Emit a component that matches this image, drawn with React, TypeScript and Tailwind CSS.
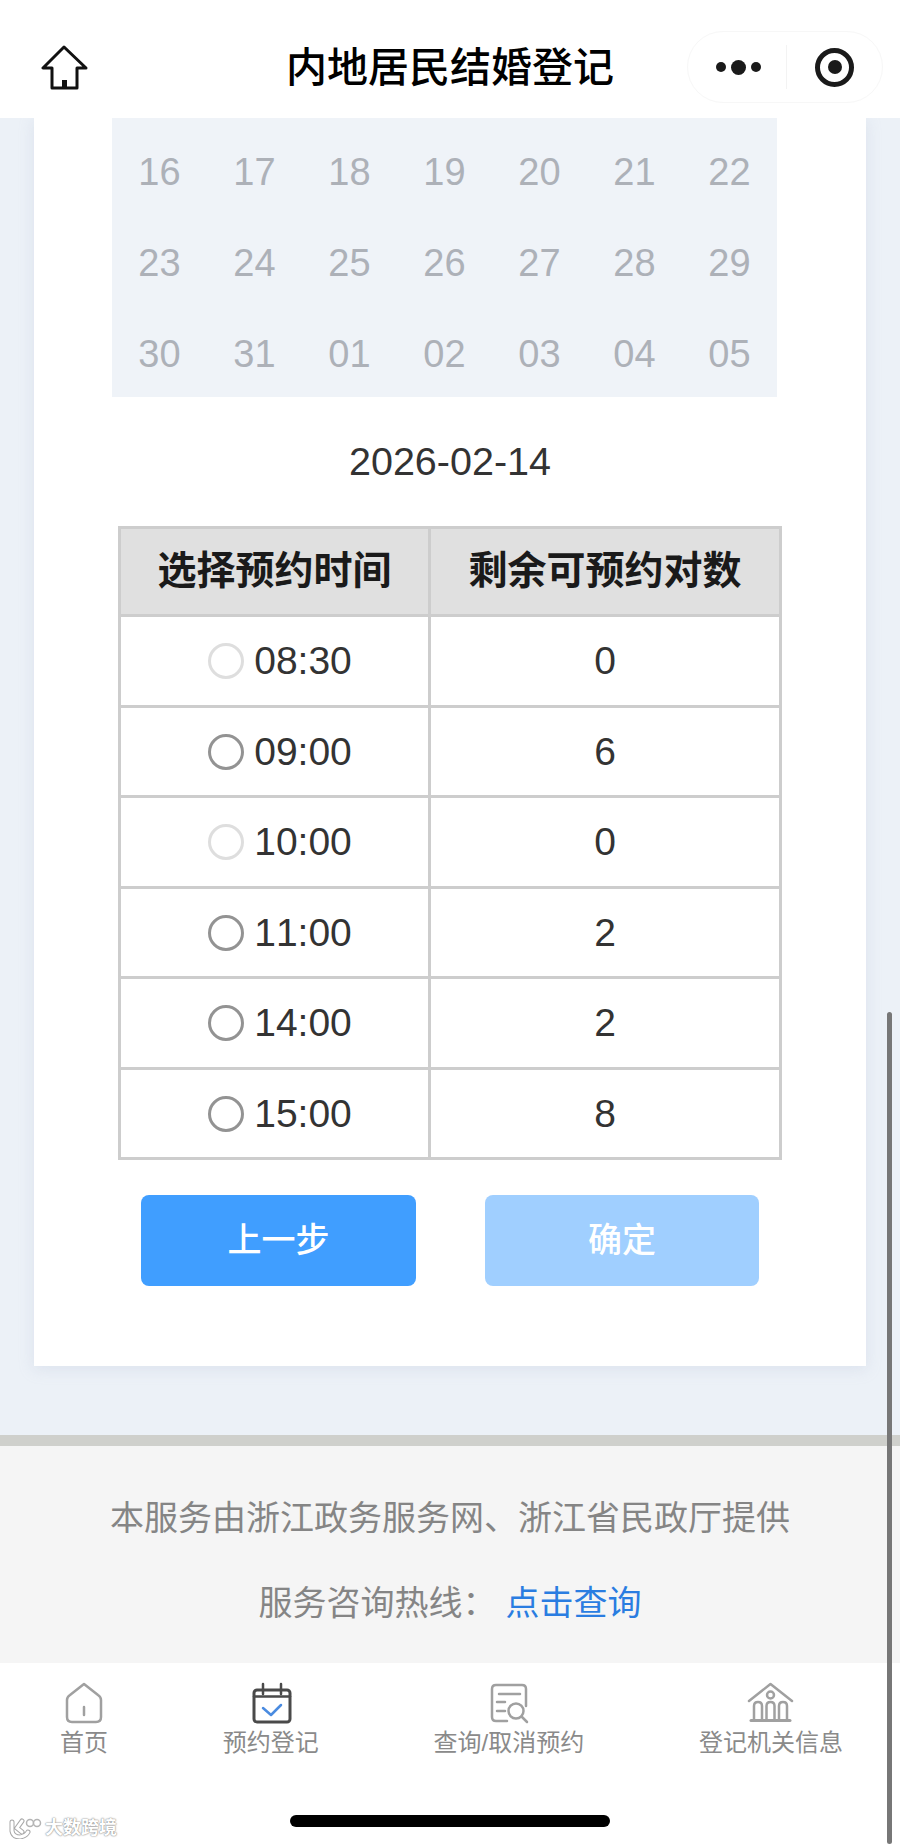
const days = [
  '16', '17', '18', '19', '20', '21', '22',
  '23', '24', '25', '26', '27', '28', '29',
  '30', '31', '01', '02', '03', '04', '05',
];

const slots = [
  { time: '08:30', left: 0 },
  { time: '09:00', left: 6 },
  { time: '10:00', left: 0 },
  { time: '11:00', left: 2 },
  { time: '14:00', left: 2 },
  { time: '15:00', left: 8 },
];

const HomeOutline = () => (
  <svg width="48" height="46" viewBox="0 0 48 46" fill="none" stroke="#111" strokeWidth="3" strokeLinejoin="round">
    <path d="M24 2 L3 23 L12 23 L12 43 L37 43 L37 23 L46 23 Z" />
    <rect x="22" y="35" width="5" height="8" fill="#111" stroke="none" />
  </svg>
);

const TabHome = () => (
  <svg width="38" height="42" viewBox="0 0 38 42" fill="none" stroke="#a0a0a0" strokeWidth="2.5" strokeLinejoin="round" strokeLinecap="round">
    <path d="M19 2 L33 13 Q36 15 36 18 L36 35 Q36 40 31 40 L7 40 Q2 40 2 35 L2 18 Q2 15 5 13 Z" />
    <path d="M19 25 L19 33" />
  </svg>
);

const TabCalendar = () => (
  <svg width="40" height="42" viewBox="0 0 40 42" fill="none" strokeLinecap="round" strokeLinejoin="round">
    <rect x="2" y="8" width="36" height="32" rx="3" stroke="#4a4a4a" strokeWidth="3" />
    <path d="M2 14.5 L38 14.5" stroke="#4a4a4a" strokeWidth="2.5" />
    <path d="M11 2 L11 12 M29 2 L29 12" stroke="#4a4a4a" strokeWidth="2.5" />
    <path d="M11 26 L19 33 L29 23" stroke="#4a8be0" strokeWidth="2.5" />
  </svg>
);

const TabSearch = () => (
  <svg width="40" height="42" viewBox="0 0 40 42" fill="none" stroke="#a0a0a0" strokeWidth="2.5" strokeLinecap="round" strokeLinejoin="round">
    <path d="M18 39 L7 39 Q3 39 3 35 L3 7 Q3 3 7 3 L33 3 Q37 3 37 7 L37 24" />
    <path d="M10 12 L31 12 M8 20 L16 20 M8 29 L16 29" />
    <circle cx="27" cy="29" r="7.5" />
    <path d="M32.5 34.5 L38 40" />
  </svg>
);

const TabBank = () => (
  <svg width="47" height="42" viewBox="0 0 47 42" fill="none" stroke="#a0a0a0" strokeWidth="2.5" strokeLinecap="round" strokeLinejoin="round">
    <path d="M2 19 L23.5 2 L45 19" />
    <circle cx="23.5" cy="13" r="3.5" />
    <path d="M7 37 L7 24 Q7 20 11 20 Q15 20 15 24 L15 37" />
    <path d="M19.5 37 L19.5 24 Q19.5 20 23.5 20 Q27.5 20 27.5 24 L27.5 37" />
    <path d="M32 37 L32 24 Q32 20 36 20 Q40 20 40 24 L40 37" />
    <path d="M4 38.5 L43 38.5" strokeWidth="3" />
  </svg>
);

const tabs = [
  { label: '首页', icon: <TabHome /> },
  { label: '预约登记', icon: <div className="pl-[3px]"><TabCalendar /></div> },
  { label: '查询/取消预约', icon: <TabSearch /> },
  { label: '登记机关信息', icon: <TabBank /> },
];

export default function App() {
  return (
    <div className="relative flex h-[1844px] w-[900px] flex-col overflow-hidden bg-white font-['Liberation_Sans','Noto_Sans_CJK_SC',sans-serif]">
      {/* top bar */}
      <header className="relative z-10 flex h-[118px] shrink-0 items-center justify-center bg-white pt-[19px]">
        <div className="absolute left-[40px] top-[45px]">
          <HomeOutline />
        </div>
        <h1 className="text-[41px] font-medium leading-none text-black">内地居民结婚登记</h1>
        <div className="absolute left-[687px] top-[31px] flex h-[72px] w-[196px] items-center rounded-[36px] border border-[#f7f7f7] bg-white">
          <div className="flex w-[98px] items-center justify-center gap-[5px] pl-[2px]">
            <span className="h-[10px] w-[10px] rounded-full bg-[#1a1a1a]" />
            <span className="h-[15px] w-[15px] rounded-full bg-[#1a1a1a]" />
            <span className="h-[10px] w-[10px] rounded-full bg-[#1a1a1a]" />
          </div>
          <span className="h-[44px] w-px bg-[#f3f3f3]" />
          <div className="flex flex-1 items-center justify-center">
            <span className="flex h-[39px] w-[39px] items-center justify-center rounded-full border-[5px] border-[#1a1a1a]">
              <span className="h-[14px] w-[14px] rounded-full bg-[#1a1a1a]" />
            </span>
          </div>
        </div>
      </header>

      {/* scrolled content */}
      <main className="h-[1317px] shrink-0 bg-[#ecf1f7] px-[34px]">
        <section className="h-[1248px] bg-white shadow-[0_3px_14px_rgba(170,185,210,0.25)]">
          <div className="ml-[78px] mr-[89px] grid h-[279px] grid-cols-7 auto-rows-[91px] overflow-hidden bg-[#eff3f8] pt-[9px]">
            {days.map((d) => (
              <div key={d} className="flex items-center justify-center text-[38px] text-[#adb1b8]">
                {d}
              </div>
            ))}
          </div>

          <div className="flex h-[129px] items-center justify-center pt-[1px] text-[39.5px] text-[#333]">2026-02-14</div>

          <div className="mx-[84px] border-[3px] border-b-0 border-[#cdcdcd] text-[39px] text-[#333] [font-kerning:none]">
            <div className="grid h-[88px] grid-cols-[310px_1fr] items-stretch border-b-[3px] border-[#cdcdcd] bg-[#e0e0e0] font-bold text-[#1a1a1a]">
              <div className="flex items-center justify-center border-r-[3px] border-[#cdcdcd]">选择预约时间</div>
              <div className="flex items-center justify-center">剩余可预约对数</div>
            </div>
            {slots.map((s) => (
              <div key={s.time} className="grid h-[90.5px] grid-cols-[310px_1fr] items-stretch border-b-[3px] border-[#cdcdcd]">
                <div className="flex items-center justify-center gap-[10px] border-r-[3px] border-[#cdcdcd] pl-[11px] pt-[1px]">
                  <span
                    className={
                      s.left === 0
                        ? 'h-[36px] w-[36px] rounded-full border-[3px] border-[#dedede]'
                        : 'h-[36px] w-[36px] rounded-full border-[3px] border-[#939393]'
                    }
                  />
                  <span>{s.time}</span>
                </div>
                <div className="flex items-center justify-center pt-[1px]">{s.left}</div>
              </div>
            ))}
          </div>

          <div className="mx-[107px] mt-[35px] flex justify-between">
            <button className="h-[91px] w-[275px] rounded-[8px] bg-[#409eff] text-[34px] font-medium text-white">上一步</button>
            <button className="h-[91px] w-[274px] rounded-[8px] bg-[#a0cfff] text-[34px] font-medium text-white">确定</button>
          </div>
        </section>
      </main>

      {/* service info */}
      <footer className="flex h-[228px] shrink-0 flex-col items-center border-t-[11px] border-[#cfd0cc] bg-[#f5f5f5] pt-[48px] text-[34px] text-[#858585]">
        <p className="leading-[48px]">本服务由浙江政务服务网、浙江省民政厅提供</p>
        <p className="mt-[37px] flex gap-[9px] leading-[48px]">
          <span>服务咨询热线：</span>
          <span className="text-[#2a7de1]">点击查询</span>
        </p>
      </footer>

      {/* tab bar */}
      <nav className="flex flex-1 items-start justify-between bg-white pl-[60px] pr-[57px] pt-[19px]">
        {tabs.map((t) => (
          <div key={t.label} className="flex flex-col items-center">
            <div className="flex h-[42px] items-center justify-center">{t.icon}</div>
            <span className="mt-[2px] text-[24px] leading-[34px] text-[#8a8a8a]">{t.label}</span>
          </div>
        ))}
      </nav>

      {/* phone overlays */}
      <div className="absolute left-[290px] top-[1815px] h-[12px] w-[320px] rounded-full bg-black" />
      <div className="absolute left-[887px] top-[1012px] h-[832px] w-[5px] rounded-full bg-[#777]" />
      <div className="absolute left-[8px] top-[1816px] flex items-center gap-[3px]">
        <svg width="34" height="22" viewBox="0 0 34 22" fill="none" strokeLinecap="round">
          <path d="M4 5 L4 14 Q5 20 12 20 Q18 19 20 15 M14 4 L9 11 L14 15" stroke="#a8a8a8" strokeWidth="5" />
          <path d="M4 5 L4 14 Q5 20 12 20 Q18 19 20 15 M14 4 L9 11 L14 15" stroke="#fff" strokeWidth="3" />
          <circle cx="22" cy="6" r="3.5" stroke="#b4b4b4" strokeWidth="1.5" fill="#fff" />
          <circle cx="29" cy="6" r="3.5" stroke="#b4b4b4" strokeWidth="1.5" fill="#fff" />
        </svg>
        <span className="text-[18px] font-bold leading-[24px] text-white [text-shadow:0_0_1px_#888,0_0_2px_#888]">大数跨境</span>
      </div>
    </div>
  );
}
